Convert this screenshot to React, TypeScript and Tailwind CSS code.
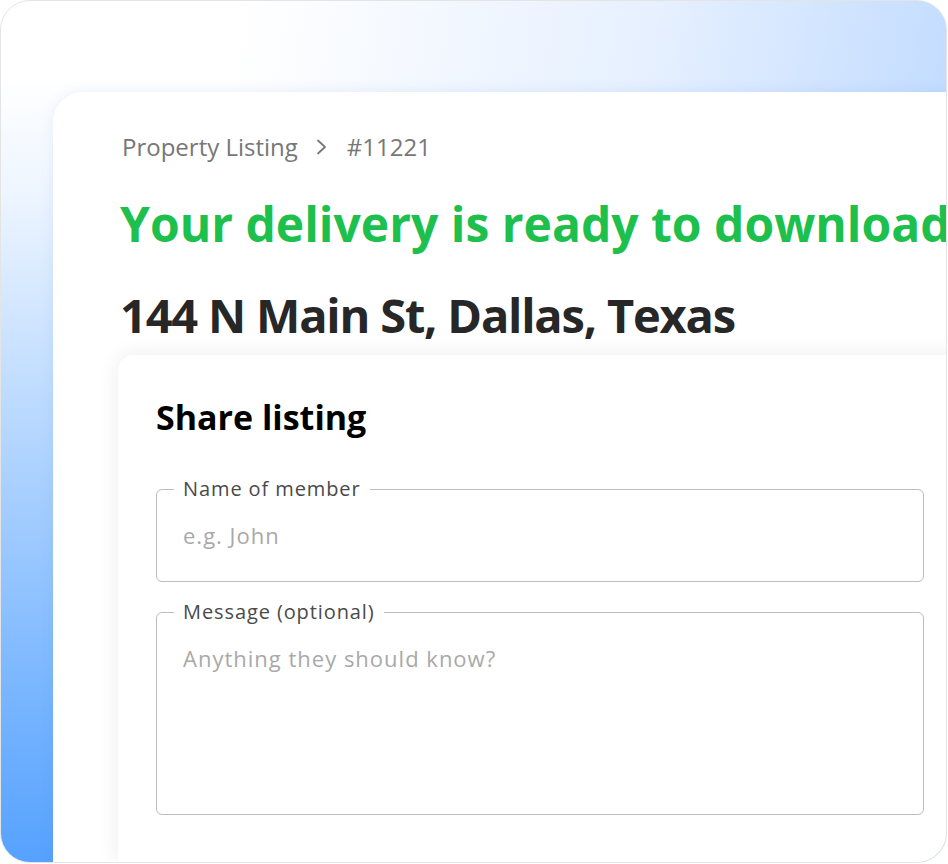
import React from "react";

export default function App() {
  return (
    <div className="w-[948px] h-[864px] bg-white" style={{ fontFamily: '"Open Sans", "Noto Sans", sans-serif' }}>
      <div className="w-[947px] h-[863px] rounded-[30px] border border-[#e4e4e4] overflow-hidden flex flex-col pt-[91px] pl-[52px] bg-[linear-gradient(to_bottom,rgba(86,162,255,0)_9%,rgba(86,162,255,0.1)_22%,rgba(92,166,255,0.82)_80%,#56a2ff_100%),linear-gradient(100deg,#ffffff_22%,#e6f0ff_60%,#b4d4ff_100%)]">
        <div className="flex-1 bg-white rounded-tl-[30px] shadow-[0_0_14px_rgba(60,120,210,0.10)] flex flex-col pt-[39px] pl-[65px] min-w-0">
          <div className="flex items-center pl-[4px] h-[32px] text-[24px] leading-[32px] text-[#777777]">
            <span>Property Listing</span>
            <svg width="12" height="16" viewBox="0 0 12 16" className="ml-[18px] mr-[19px]" fill="none">
              <polyline points="2,1.5 9,8 2,14.5" stroke="#777777" strokeWidth="1.8" strokeLinecap="round" strokeLinejoin="round" />
            </svg>
            <span>#11221</span>
          </div>
          <div className="mt-[33px] pl-[2px] text-[48px] leading-[56px] font-bold text-[#1dbf4d] whitespace-nowrap">
            Your delivery is ready to download
          </div>
          <div className="mt-[35px] pl-[2px] text-[47px] leading-[56px] font-bold tracking-[-1.2px] text-[#272727] whitespace-nowrap">
            144 N Main St, Dallas, Texas
          </div>
          <div className="mt-[12px] w-[860px] flex-1 bg-white rounded-tl-[16px] shadow-[0_0_22px_rgba(0,0,0,0.08)] pt-[40px] pl-[38px]">
            <div className="text-[34px] leading-[44px] font-bold text-black">Share listing</div>
            <fieldset className="mt-[37px] w-[768px] h-[106px] border border-[#bdbdbd] rounded-[6px] pl-[17px]">
              <legend className="px-[9px] text-[20px] leading-[26px] tracking-[0.9px] text-[#4a4a4a]">Name of member</legend>
              <div className="mt-[18px] pl-[9px] text-[22px] leading-[30px] tracking-[1px] text-[#a9a9a9]">e.g. John</div>
            </fieldset>
            <fieldset className="mt-[17px] w-[768px] h-[216px] border border-[#bdbdbd] rounded-[6px] pl-[17px]">
              <legend className="px-[9px] text-[20px] leading-[26px] tracking-[0.9px] text-[#4a4a4a]">Message (optional)</legend>
              <div className="mt-[18px] pl-[9px] text-[22px] leading-[30px] tracking-[1px] text-[#a9a9a9]">Anything they should know?</div>
            </fieldset>
          </div>
        </div>
      </div>
    </div>
  );
}
